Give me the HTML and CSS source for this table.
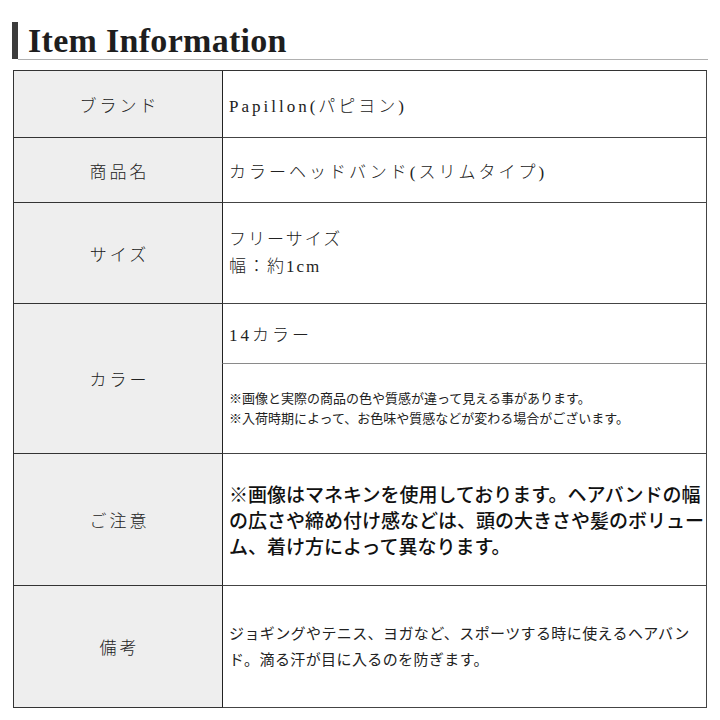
FILE: index.html
```html
<!DOCTYPE html>
<html lang="ja">
<head>
<meta charset="utf-8">
<title>Item Information</title>
<link rel="stylesheet" href="styles.css">
</head>
<body>
<div class="page">
  <div class="heading">
    <div class="heading-bar"></div>
    <h1 class="heading-title">Item Information</h1>
  </div>
  <div class="spec">
    <div class="label row-brand">ブランド</div>
    <div class="value">Papillon(パピヨン)</div>

    <div class="label row-name">商品名</div>
    <div class="value">カラーヘッドバンド(スリムタイプ)</div>

    <div class="label row-size">サイズ</div>
    <div class="value value-lines"><p class="text">フリーサイズ<br>幅：約1cm</p></div>

    <div class="label label-color">カラー</div>
    <div class="value value-sub">14カラー</div>
    <div class="value value-note"><p class="text">※画像と実際の商品の色や質感が違って見える事があります。<br>※入荷時期によって、お色味や質感などが変わる場合がございます。</p></div>

    <div class="label">ご注意</div>
    <div class="value value-caution"><p class="text">※画像はマネキンを使用しております。ヘアバンドの幅<br>の広さや締め付け感などは、頭の大きさや髪のボリュー<br>ム、着け方によって異なります。</p></div>

    <div class="label">備考</div>
    <div class="value value-remark"><p class="text">ジョギングやテニス、ヨガなど、スポーツする時に使えるヘアバン<br>ド。滴る汗が目に入るのを防ぎます。</p></div>
  </div>
</div>
</body>
</html>
```

FILE: styles.css
```css
* {
  box-sizing: border-box;
}

html, body {
  margin: 0;
  padding: 0;
  background: #ffffff;
}

.page {
  width: 720px;
  height: 720px;
  padding: 22px 12px 0 12px;
  font-family: "Liberation Serif", "Noto Sans CJK JP", serif;
  color: #222;
}

.heading {
  display: flex;
  align-items: flex-start;
}

.heading-bar {
  width: 6px;
  height: 37px;
  background: #3c3c3c;
}

.heading-title {
  flex: 1;
  margin: 0;
  height: 38px;
  padding-left: 10px;
  border-bottom: 1px solid #b0b0b0;
  font-family: "Liberation Serif", serif;
  font-weight: 700;
  font-size: 34px;
  line-height: 37px;
  letter-spacing: 0.3px;
  color: #1e1e1e;
}

.spec {
  margin: 10px 1px 0 1px;
  width: 694px;
  display: grid;
  grid-template-columns: 208px 1fr;
  grid-template-rows: 67px 65px 101px 60px 90px 132px 122px;
  border-top: 1px solid #333;
  border-left: 1px solid #333;
  border-right: 1px solid #444;
}

.label {
  display: flex;
  align-items: center;
  justify-content: center;
  background: #eeeeee;
  border-bottom: 1px solid #333;
  font-size: 17px;
  letter-spacing: 3px;
  padding-left: 3px;
  color: #222;
  font-weight: 300;
}

.label-color {
  grid-row: span 2;
}

.value {
  display: flex;
  align-items: center;
  border-left: 1px solid #222;
  border-bottom: 1px solid #444;
  padding-left: 6px;
  font-size: 17px;
  letter-spacing: 3px;
  color: #222;
  font-weight: 300;
}

.text {
  margin: 0;
}

.value-lines {
  letter-spacing: 2px;
  line-height: 27px;
}

.value-sub {
  border-bottom: 1px solid #8a8a8a;
}

.value-note {
  font-size: 13px;
  letter-spacing: 0;
  line-height: 20px;
  font-weight: 400;
}

.value-caution {
  font-family: "Noto Sans CJK JP", sans-serif;
  font-size: 19px;
  letter-spacing: 0;
  line-height: 26px;
  font-weight: 500;
  color: #111;
}

.value-remark {
  font-size: 15px;
  letter-spacing: 0.4px;
  line-height: 26px;
  font-weight: 400;
}
```
